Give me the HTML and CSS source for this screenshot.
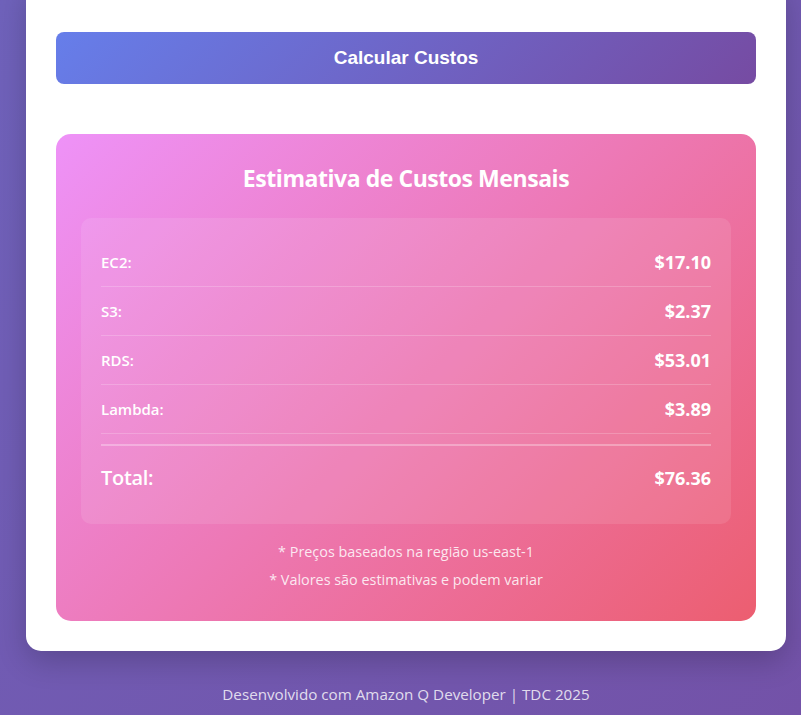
FILE: index.html
```html
<!DOCTYPE html>
<html lang="pt-BR">
<head>
<meta charset="utf-8">
<title>Calculadora de Custos AWS</title>
<link rel="stylesheet" href="styles.css">
</head>
<body>
<div class="container">
  <main class="card">
    <button class="calc-btn" type="button">Calcular Custos</button>
    <section class="results">
      <h3 class="results-title">Estimativa de Custos Mensais</h3>
      <div class="cost-list">
        <div class="cost-row"><span class="cost-label">EC2:</span><span class="cost-value">$17.10</span></div>
        <div class="cost-row"><span class="cost-label">S3:</span><span class="cost-value">$2.37</span></div>
        <div class="cost-row"><span class="cost-label">RDS:</span><span class="cost-value">$53.01</span></div>
        <div class="cost-row"><span class="cost-label">Lambda:</span><span class="cost-value">$3.89</span></div>
        <div class="total-row"><span class="total-label">Total:</span><span class="total-value">$76.36</span></div>
      </div>
      <div class="notes">
        <p>* Preços baseados na região us-east-1</p>
        <p>* Valores são estimativas e podem variar</p>
      </div>
    </section>
  </main>
  <footer class="footer">Desenvolvido com Amazon Q Developer | TDC 2025</footer>
</div>
</body>
</html>
```
FILE: styles.css
```css
* { box-sizing: border-box; }

html, body {
  margin: 0;
  padding: 0;
  height: 100%;
}

body {
  background: linear-gradient(135deg, #6f62bb 0%, #7352a8 100%);
  font-family: "Open Sans", "Noto Sans", sans-serif;
  color: #333;
  overflow: hidden;
}

.container {
  width: 760px;
  margin: 0 15px 0 26px;
}

.card {
  background: #ffffff;
  border-radius: 15px;
  margin-top: -20px;
  padding: 52px 30px 30px;
  box-shadow: 0 10px 30px rgba(0, 0, 0, 0.2);
}

.calc-btn {
  display: block;
  width: 100%;
  height: 52px;
  border: none;
  border-radius: 8px;
  background: linear-gradient(135deg, #667eea 0%, #764ba2 100%);
  color: #ffffff;
  font-family: "Liberation Sans", Arial, sans-serif;
  font-weight: bold;
  font-size: 19px;
  line-height: 22px;
  padding: 15px;
}

.results {
  margin-top: 50px;
  border-radius: 15px;
  padding: 29px 25px 30px;
  background: linear-gradient(135deg, #ee92f8 0%, #ec5e70 100%);
  color: #ffffff;
}

.results-title {
  margin: 0 0 24px;
  text-align: center;
  font-size: 23px;
  line-height: 31px;
  font-weight: 700;
  letter-spacing: -0.45px;
}

.cost-list {
  background: rgba(255, 255, 255, 0.1);
  border-radius: 10px;
  padding: 20px;
}

.cost-row {
  display: flex;
  justify-content: space-between;
  align-items: center;
  padding: 12px 0;
  height: 49px;
  border-bottom: 1px solid rgba(255, 255, 255, 0.2);
}

.cost-label {
  font-size: 15px;
  font-weight: 600;
  line-height: 24px;
}

.cost-value {
  font-size: 18px;
  font-weight: 700;
  line-height: 24px;
}

.total-row {
  display: flex;
  justify-content: space-between;
  align-items: center;
  margin-top: 10px;
  border-top: 2px solid rgba(255, 255, 255, 0.3);
  padding: 18px 0 12px;
  line-height: 28px;
}

.total-label {
  font-size: 20px;
  font-weight: 600;
  letter-spacing: -0.3px;
}

.total-value {
  font-size: 18px;
  font-weight: 700;
}

.notes {
  margin-top: 16px;
  text-align: center;
  font-size: 14.4px;
  line-height: 23px;
  color: rgba(255, 255, 255, 0.85);
}

.notes p {
  margin: 0;
}

.notes p + p {
  margin-top: 5px;
}

.footer {
  margin-top: 31px;
  text-align: center;
  font-size: 15.2px;
  line-height: 24px;
  color: rgba(255, 255, 255, 0.8);
}
```
